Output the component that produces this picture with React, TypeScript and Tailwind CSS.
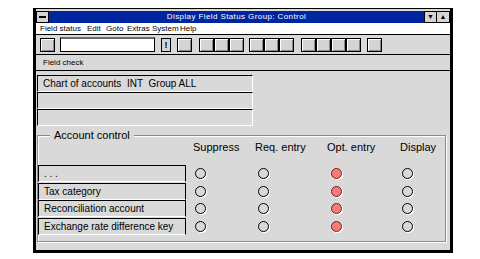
import React from 'react'

const rows = ['. . .', 'Tax category', 'Reconciliation account', 'Exchange rate difference key']

const ToolBtn: React.FC<{ className?: string }> = ({ className = '' }) => (
  <div className={`w-[15px] h-[14px] bg-[#d4d4d4] border border-black shadow-[inset_1px_1px_0_#fff,inset_-1px_-1px_0_#8a8a8a] ${className}`} />
)

const Radio: React.FC<{ on?: boolean }> = ({ on }) => (
  <div
    className={`w-[11px] h-[11px] rounded-full border shadow-[1px_1px_0_#fff] ${
      on ? 'bg-[#f47c7c] border-[#7a1c1c]' : 'bg-transparent border-black'
    }`}
  />
)

export default function App() {
  return (
    <div className="w-[480px] h-[259px] bg-white font-['Liberation_Sans',Arial,sans-serif] text-black overflow-hidden">
      <div className="ml-[33px] pt-[8px]">
        <div className="w-[420px] h-[245px] bg-[#d9d9d9] border-t border-x-[3px] border-b-[3px] border-black flex flex-col">
          {/* Title bar */}
          <div className="flex h-[13px] mt-[2px] bg-white">
            <div className="w-[13px] h-[12px] bg-[#d4d4d4] border border-black flex items-center justify-center">
              <div className="w-[7px] h-[2px] bg-black" />
            </div>
            <div className="flex-1 h-[12px] bg-[#0025a0] text-white text-[8px] leading-[12px] text-center tracking-[0.4px]">
              Display Field Status Group: Control
            </div>
            <div className="w-[13px] h-[12px] bg-[#d4d4d4] border border-black text-[7px] leading-[10px] text-center">▼</div>
            <div className="w-[13px] h-[12px] bg-[#d4d4d4] border-y border-r border-black text-[7px] leading-[10px] text-center">▲</div>
          </div>

          {/* Menu bar */}
          <div className="h-[11px] bg-white border-b border-black flex items-center pl-[4px] text-[8px] leading-[10px] whitespace-nowrap">
            <span className="w-[47px] shrink-0">Field status</span>
            <span className="w-[19px] shrink-0">Edit</span>
            <span className="w-[21px] shrink-0">Goto</span>
            <span className="w-[53px] shrink-0">Extras System</span>
            <span className="shrink-0">Help</span>
          </div>

          {/* Toolbar */}
          <div className="h-[20px] border-b border-black flex items-center pl-[4px]">
            <ToolBtn />
            <div className="ml-[5px] w-[95px] h-[15px] bg-white border border-black border-t-[2px] border-t-[#6a6a6a]" />
            <div className="ml-[6px] w-[10px] h-[14px] bg-[#d4d4d4] border border-black text-[9px] leading-[12px] text-center font-bold">!</div>
            <ToolBtn className="ml-[6px]" />
            <div className="ml-[7px] flex">
              <ToolBtn />
              <ToolBtn />
              <ToolBtn />
            </div>
            <div className="ml-[5px] flex">
              <ToolBtn />
              <ToolBtn />
              <ToolBtn />
            </div>
            <div className="ml-[7px] flex">
              <ToolBtn />
              <ToolBtn />
              <ToolBtn />
              <ToolBtn />
            </div>
            <ToolBtn className="ml-[6px]" />
          </div>

          {/* Field check */}
          <div className="h-[16px] border-b border-black pl-[7px] text-[8px] leading-[15px]">
            Field check
          </div>

          {/* Content */}
          <div className="flex-1 pl-[1px] pr-[4px] pt-[4px]">
            <div className="w-[216px] flex flex-col">
              <div className="h-[17px] border-t border-l border-black border-b border-b-white border-r border-r-white pl-[5px] text-[10px] leading-[15px] whitespace-nowrap">
                Chart of accounts&nbsp; INT&nbsp; Group ALL
              </div>
              <div className="h-[17px] border-t border-l border-black border-b border-b-white border-r border-r-white" />
              <div className="h-[17px] border-t border-l border-black border-b border-b-white border-r border-r-white" />
            </div>

            {/* Account control group */}
            <div className="relative mt-[9px] w-[409px] h-[107px] border border-[#8a8a8a] shadow-[inset_1px_1px_0_#fff,1px_1px_0_#fff]">
              <div className="absolute -top-[8px] left-[12px] px-[4px] bg-[#d9d9d9] text-[11px] leading-[14px]">
                Account control
              </div>
              <div className="flex pt-[4px] text-[11px] leading-[14px]">
                <div className="w-[155px]" />
                <div className="w-[62px]">Suppress</div>
                <div className="w-[72px]">Req. entry</div>
                <div className="w-[73px]">Opt. entry</div>
                <div>Display</div>
              </div>
              <div className="flex flex-col mt-[11px]">
                {rows.map(r => (
                  <div key={r} className="flex items-center h-[17.5px]">
                    <div className="w-[148px] h-[17px] border-t border-l border-r border-black border-b border-b-white pl-[5px] text-[10px] leading-[15px] whitespace-nowrap">
                      {r}
                    </div>
                    <div className="w-[7px]" />
                    <div className="w-[62px] pl-[2px]"><Radio /></div>
                    <div className="w-[72px] pl-[3px]"><Radio /></div>
                    <div className="w-[73px] pl-[4px]"><Radio on /></div>
                    <div className="pl-[2px]"><Radio /></div>
                  </div>
                ))}
              </div>
            </div>
          </div>
        </div>
      </div>
    </div>
  )
}
